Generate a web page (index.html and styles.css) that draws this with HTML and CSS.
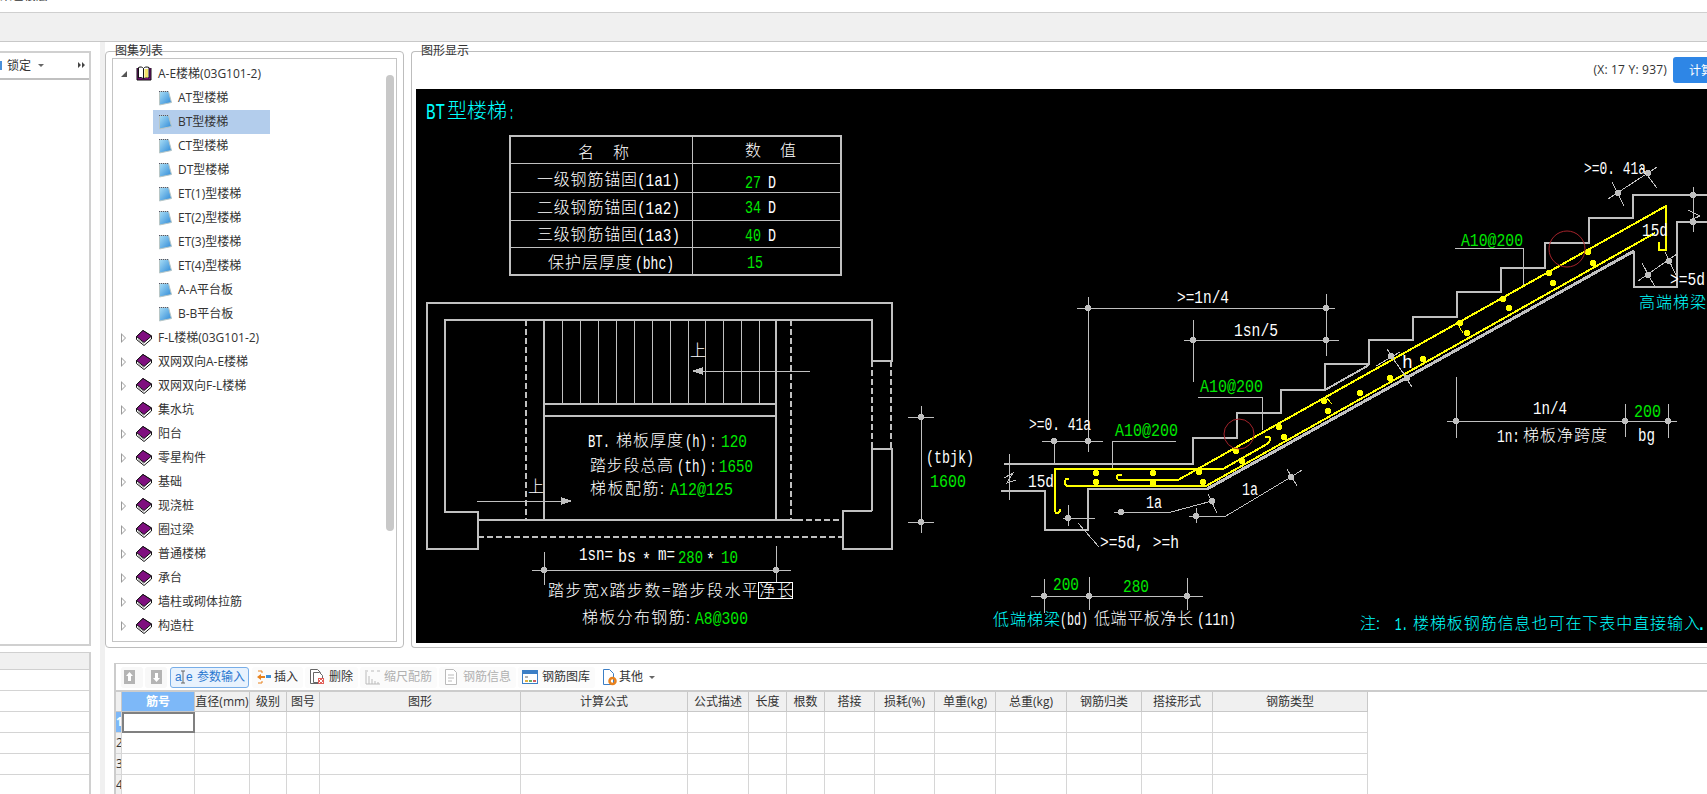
FILE: index.html
```html
<!DOCTYPE html>
<html lang="zh-CN">
<head>
<meta charset="utf-8">
<title>图集</title>
<link rel="stylesheet" href="styles.css">
</head>
<body>
<svg class="defs" width="0" height="0" aria-hidden="true">
  <defs>
    <linearGradient id="ng" x1="0" y1="0" x2="1" y2="1">
      <stop offset="0" stop-color="#a9def6"/>
      <stop offset="1" stop-color="#2a86d6"/>
    </linearGradient>
    <symbol id="ic-book" viewBox="0 0 16 16">
      <path d="M.5 6.500 7 .5l8.500 5.500v3L8 15.500.5 9.500z" fill="#fff" stroke="#111"/>
      <path d="M.5 6.500 7 .5l8.500 5.500L8 12.500z" fill="#7f0f7f" stroke="#111"/>
      <path d="M2.500 9.500l5.500 4" stroke="#999" fill="none"/>
    </symbol>
    <symbol id="ic-open" viewBox="0 0 16 16">
      <path d="M1 2v12h14V2" fill="#7f0f7f" stroke="#111"/>
      <path d="M2.500 1.500c2-1 4-.5 5 1 1-1.500 3-2 5.500-1v10.500c-2.500-1-4.500-.5-5.500 1-1-1.500-3-2-5-1z" fill="#fff" stroke="#111"/>
      <path d="M8.500 3h3.500v8.500H8.500z" fill="#f3e36a"/>
      <path d="M7.500 2.500V13" stroke="#111"/>
    </symbol>
    <symbol id="ic-note" viewBox="0 0 14 16">
      <path d="M1.500 1.500h9l3 11-12 2.500z" fill="url(#ng)" stroke="#b7c6c6"/>
      <path d="M1 1.500h9.500" stroke="#556" stroke-dasharray="1 1"/>
    </symbol>
  </defs>
</svg>
<div class="app">
  <header class="titlebar"><span class="titletext">某色楼层</span></header>
  <div class="toolbar"></div>
  <div class="content">
    <aside class="leftcol">
      <section class="lpanel">
        <div class="lhead">
          <i class="lockicon"></i><span>锁定</span><i class="caret lcaret"></i>
          <span class="more">
            <svg width="8" height="8" viewBox="0 0 8 8"><path d="M0 1l3 3-3 3zM4 1l3 3-3 3z" fill="#444"/></svg>
          </span>
        </div>
      </section>
      <section class="lgrid">
        <div class="lgrid-head"></div>
        <div class="lgrid-row"></div>
        <div class="lgrid-row"></div>
        <div class="lgrid-row"></div>
        <div class="lgrid-row"></div>
        <div class="lgrid-row"></div>
        <div class="lgrid-row"></div>
      </section>
    </aside>
    <main class="main">
      <div class="upper">
        <section class="group treegroup">
          <span class="legend">图集列表</span>
          <div class="treebox">
            <ul class="tree">
              <li class="row"><i class="exp-open"></i><svg class="ibook"><use href="#ic-open"/></svg><span>A-E楼梯(03G101-2)</span></li>
              <li class="row sub"><div class="node"><svg class="inote"><use href="#ic-note"/></svg><span>AT型楼梯</span></div></li>
              <li class="row sub"><div class="node sel"><svg class="inote"><use href="#ic-note"/></svg><span>BT型楼梯</span></div></li>
              <li class="row sub"><div class="node"><svg class="inote"><use href="#ic-note"/></svg><span>CT型楼梯</span></div></li>
              <li class="row sub"><div class="node"><svg class="inote"><use href="#ic-note"/></svg><span>DT型楼梯</span></div></li>
              <li class="row sub"><div class="node"><svg class="inote"><use href="#ic-note"/></svg><span>ET(1)型楼梯</span></div></li>
              <li class="row sub"><div class="node"><svg class="inote"><use href="#ic-note"/></svg><span>ET(2)型楼梯</span></div></li>
              <li class="row sub"><div class="node"><svg class="inote"><use href="#ic-note"/></svg><span>ET(3)型楼梯</span></div></li>
              <li class="row sub"><div class="node"><svg class="inote"><use href="#ic-note"/></svg><span>ET(4)型楼梯</span></div></li>
              <li class="row sub"><div class="node"><svg class="inote"><use href="#ic-note"/></svg><span>A-A平台板</span></div></li>
              <li class="row sub"><div class="node"><svg class="inote"><use href="#ic-note"/></svg><span>B-B平台板</span></div></li>
              <li class="row"><i class="exp"></i><svg class="ibook"><use href="#ic-book"/></svg><span>F-L楼梯(03G101-2)</span></li>
              <li class="row"><i class="exp"></i><svg class="ibook"><use href="#ic-book"/></svg><span>双网双向A-E楼梯</span></li>
              <li class="row"><i class="exp"></i><svg class="ibook"><use href="#ic-book"/></svg><span>双网双向F-L楼梯</span></li>
              <li class="row"><i class="exp"></i><svg class="ibook"><use href="#ic-book"/></svg><span>集水坑</span></li>
              <li class="row"><i class="exp"></i><svg class="ibook"><use href="#ic-book"/></svg><span>阳台</span></li>
              <li class="row"><i class="exp"></i><svg class="ibook"><use href="#ic-book"/></svg><span>零星构件</span></li>
              <li class="row"><i class="exp"></i><svg class="ibook"><use href="#ic-book"/></svg><span>基础</span></li>
              <li class="row"><i class="exp"></i><svg class="ibook"><use href="#ic-book"/></svg><span>现浇桩</span></li>
              <li class="row"><i class="exp"></i><svg class="ibook"><use href="#ic-book"/></svg><span>圈过梁</span></li>
              <li class="row"><i class="exp"></i><svg class="ibook"><use href="#ic-book"/></svg><span>普通楼梯</span></li>
              <li class="row"><i class="exp"></i><svg class="ibook"><use href="#ic-book"/></svg><span>承台</span></li>
              <li class="row"><i class="exp"></i><svg class="ibook"><use href="#ic-book"/></svg><span>墙柱或砌体拉筋</span></li>
              <li class="row"><i class="exp"></i><svg class="ibook"><use href="#ic-book"/></svg><span>构造柱</span></li>
            </ul>
            <div class="scroll"><div class="thumb"></div></div>
          </div>
        </section>
        <section class="group graphgroup">
          <span class="legend">图形显示</span>
          <div class="graphhead">
            <span class="coords">(X: 17 Y: 937)</span>
            <button class="calc">计算</button>
          </div>
          <svg class="cad" viewBox="416 89 1291 554" width="1291" height="554">
            <defs>
              <circle id="d" r="3" fill="#c0c0c0"/>
              <circle id="y" r="3" fill="#ffff00"/>
            </defs>
            <!-- parameter table -->
            <rect class="wall" x="510" y="136" width="331" height="139"/>
            <path class="thin" d="M692 136V275M510 163H841M510 192H841M510 220H841M510 247H841"/>
            <text class="w" x="578" y="158">名</text><text class="w" x="613" y="158">称</text>
            <text class="w" x="745" y="156">数</text><text class="w" x="780" y="156">值</text>
            <text class="w" x="537" y="185" textLength="100">一级钢筋锚固</text><text class="w n" x="637" y="186" textLength="43" lengthAdjust="spacingAndGlyphs">(1a1)</text>
            <text class="w" x="537" y="213" textLength="100">二级钢筋锚固</text><text class="w n" x="637" y="214" textLength="43" lengthAdjust="spacingAndGlyphs">(1a2)</text>
            <text class="w" x="537" y="240" textLength="100">三级钢筋锚固</text><text class="w n" x="637" y="241" textLength="43" lengthAdjust="spacingAndGlyphs">(1a3)</text>
            <text class="w" x="548" y="268" textLength="84">保护层厚度</text><text class="w n" x="635" y="269" textLength="39" lengthAdjust="spacingAndGlyphs">(bhc)</text>
            <text class="g n" x="745" y="188" textLength="16" lengthAdjust="spacingAndGlyphs">27</text><text class="w n" x="768" y="188" textLength="8" lengthAdjust="spacingAndGlyphs">D</text>
            <text class="g n" x="745" y="213" textLength="16" lengthAdjust="spacingAndGlyphs">34</text><text class="w n" x="768" y="213" textLength="8" lengthAdjust="spacingAndGlyphs">D</text>
            <text class="g n" x="745" y="241" textLength="16" lengthAdjust="spacingAndGlyphs">40</text><text class="w n" x="768" y="241" textLength="8" lengthAdjust="spacingAndGlyphs">D</text>
            <text class="g n" x="747" y="268" textLength="16" lengthAdjust="spacingAndGlyphs">15</text>
            <text class="c n bign" x="426" y="119" textLength="19" lengthAdjust="spacingAndGlyphs">BT</text>
            <text class="c big" x="447" y="118" textLength="60">型楼梯</text>
            <text class="c n" x="509" y="119" textLength="5" lengthAdjust="spacingAndGlyphs">:</text>

            <!-- plan view -->
            <path class="wall" d="M872 361H892V303H427V549H478V512H445V320H872V361"/>
            <path class="wall" d="M872 511V449H892V549H843V511H872"/>
            <path class="wall dash" d="M872 361V449M891 361V449"/>
            <path class="wall dash" d="M526 320V519M791 320V519M797 520H843M478 537H843"/>
            <path class="wall" d="M544 320V519M776 320V519M544 404H776M544 416H776M478 520H797"/>
            <path class="thin" d="M562 320V404M580 320V404M598 320V404M616 320V404M634 320V404M652 320V404M670 320V404M688 320V404M705 320V404M723 320V404M741 320V404M759 320V404"/>
            <path class="thin" d="M810 371H695M477 501H565"/>
            <path class="fillg" d="M692 371L703 367V375zM572 501L561 497V505z"/>
            <text class="w" x="690" y="356">上</text>
            <text class="w" x="528" y="492">上</text>
            <text class="w n" x="588" y="447" textLength="22" lengthAdjust="spacingAndGlyphs">BT.</text><text class="w" x="616" y="446" textLength="67">梯板厚度</text><text class="w n" x="685" y="447" textLength="22" lengthAdjust="spacingAndGlyphs">(h)</text><text class="w n" x="710" y="447" textLength="6" lengthAdjust="spacingAndGlyphs">:</text>
            <text class="g n" x="721" y="447" textLength="26" lengthAdjust="spacingAndGlyphs">120</text>
            <text class="w" x="590" y="471" textLength="83">踏步段总高</text><text class="w n" x="677" y="472" textLength="30" lengthAdjust="spacingAndGlyphs">(th)</text><text class="w n" x="710" y="472" textLength="6" lengthAdjust="spacingAndGlyphs">:</text>
            <text class="g n" x="719" y="472" textLength="34" lengthAdjust="spacingAndGlyphs">1650</text>
            <text class="w" x="590" y="494" textLength="74">梯板配筋:</text><text class="g n" x="670" y="495" textLength="63" lengthAdjust="spacingAndGlyphs">A12@125</text>
            <text class="w n" x="579" y="560" textLength="34" lengthAdjust="spacingAndGlyphs">1sn=</text><text class="w n" x="618" y="562" textLength="18" lengthAdjust="spacingAndGlyphs">bs</text><text class="w n" x="642" y="565" textLength="9" lengthAdjust="spacingAndGlyphs">*</text><text class="w n" x="658" y="560" textLength="17" lengthAdjust="spacingAndGlyphs">m=</text>
            <text class="g n" x="678" y="563" textLength="25" lengthAdjust="spacingAndGlyphs">280</text><text class="w n" x="706" y="565" textLength="9" lengthAdjust="spacingAndGlyphs">*</text><text class="g n" x="721" y="563" textLength="17" lengthAdjust="spacingAndGlyphs">10</text>
            <path class="thin" d="M532 570H791M544 552V585M776 546V582"/>
            <use href="#d" x="544" y="570"/><use href="#d" x="776" y="570"/>
            <rect class="whitebox" x="758" y="582" width="34" height="16"/>
            <text class="w" x="548" y="596" textLength="245">踏步宽x踏步数=踏步段水平净长</text>
            <text class="w" x="582" y="623" textLength="108">梯板分布钢筋:</text><text class="g n" x="695" y="624" textLength="53" lengthAdjust="spacingAndGlyphs">A8@300</text>
            <path class="thin" d="M921 406V533M908 417H934M908 522H934"/>
            <use href="#d" x="921" y="417"/><use href="#d" x="921" y="522"/>
            <text class="w n" x="926" y="463" textLength="48" lengthAdjust="spacingAndGlyphs">(tbjk)</text>
            <text class="g n" x="930" y="487" textLength="36" lengthAdjust="spacingAndGlyphs">1600</text>

            <!-- stair section: concrete outline -->
            <path class="wall" d="M1004 464H1193V438H1237V413H1281V390H1325V364H1369V340H1413V317H1457V292H1501V268H1545V243H1589V218H1633V195H1707"/>
            <path class="wall" d="M1707 222H1677V287H1634V251"/>
            <path class="wall" d="M1207 489H1088V530H1045V491H1001"/>
            <path class="wall thick2" d="M1634 251L1207 489"/>
            <path class="wall" d="M1325 390L1369 365"/>
            <!-- reinforcement -->
            <path class="rebar" d="M1060 509Q1060 513 1057 513Q1055 513 1055 510V469H1223L1267 444Q1271 441 1270 438Q1269 436 1265 437"/>
            <path class="rebar" d="M1069 479H1067Q1065 479 1065 482Q1065 486 1068 486H1206L1655 233"/>
            <path class="rebar" d="M1122 475H1119Q1117 475 1117 477Q1117 480 1120 480H1178L1666 206V250H1659V242"/>
            <path class="thinY" d="M1325 396L1332 404M1457 323L1463 333"/>
            <g>
              <use href="#y" x="1096" y="473"/><use href="#y" x="1096" y="482"/><use href="#y" x="1153" y="473"/><use href="#y" x="1153" y="483"/>
              <use href="#y" x="1199" y="472"/><use href="#y" x="1203" y="482"/><use href="#y" x="1236" y="451"/><use href="#y" x="1242" y="461"/>
              <use href="#y" x="1279" y="427"/><use href="#y" x="1284" y="437"/><use href="#y" x="1324" y="401"/><use href="#y" x="1328" y="411"/>
              <use href="#y" x="1360" y="393"/><use href="#y" x="1390" y="378"/><use href="#y" x="1423" y="359"/>
              <use href="#y" x="1460" y="323"/><use href="#y" x="1467" y="333"/><use href="#y" x="1503" y="299"/><use href="#y" x="1509" y="308"/>
              <use href="#y" x="1549" y="273"/><use href="#y" x="1553" y="283"/><use href="#y" x="1588" y="252"/><use href="#y" x="1593" y="263"/>
            </g>
            <circle class="red" cx="1239" cy="434" r="15"/>
            <circle class="red" cx="1567" cy="249" r="18"/>
            <!-- dimensions -->
            <path class="thin" d="M1077 308H1335M1088 297V452M1326 294V356"/>
            <path class="thin" d="M1184 340H1339M1193 320V382"/>
            <path class="thin" d="M1198 397H1262V430M1176 441H1112V468M1042 441H1103M1054 441V464"/>
            <path class="thin" d="M1114 512H1171L1212 501M1208 494L1217 513"/>
            <path class="thin" d="M1189 516H1226L1291 477L1302 470M1287 469L1297 486M1196 508V523"/>
            <path class="thin" d="M1068 505V526M1063 518H1095M1078 523L1099 547"/>
            <path class="thin" d="M1031 596H1203M1044 579V613M1089 577V610M1187 578V610"/>
            <path class="thin" d="M1009 454V500M1004 478L1013 473L1007 483L1016 480"/>
            <path class="thin" d="M1447 421H1677M1456 377V438M1625 404V437M1668 404V438"/>
            <path class="thin" d="M1376 366L1400 352M1387 349L1412 387M1391 356L1407 378"/>
            <path class="thin" d="M1608 199L1657 167M1612 182L1624 206M1641 167L1657 188"/>
            <path class="thin" d="M1693 187V232M1688 210L1700 216L1690 220"/>
            <path class="thin" d="M1638 281L1677 254M1642 263L1655 287M1665 252L1677 277"/>
            <path class="thin" d="M1455 248H1523V285"/>
            <g>
              <use href="#d" x="1088" y="308"/><use href="#d" x="1326" y="308"/><use href="#d" x="1193" y="340"/><use href="#d" x="1326" y="340"/>
              <use href="#d" x="1054" y="441"/><use href="#d" x="1088" y="441"/><use href="#d" x="1121" y="512"/><use href="#d" x="1212" y="501"/>
              <use href="#d" x="1196" y="516"/><use href="#d" x="1291" y="477"/><use href="#d" x="1068" y="518"/>
              <use href="#d" x="1044" y="596"/><use href="#d" x="1089" y="596"/><use href="#d" x="1187" y="596"/>
              <use href="#d" x="1456" y="421"/><use href="#d" x="1625" y="421"/><use href="#d" x="1668" y="421"/>
              <use href="#d" x="1391" y="356"/><use href="#d" x="1407" y="378"/><use href="#d" x="1618" y="193"/><use href="#d" x="1648" y="173"/>
              <use href="#d" x="1693" y="195"/><use href="#d" x="1693" y="222"/><use href="#d" x="1648" y="275"/><use href="#d" x="1669" y="261"/>
            </g>
            <text class="w n" x="1177" y="303" textLength="52" lengthAdjust="spacingAndGlyphs">&gt;=1n/4</text>
            <text class="w n" x="1234" y="336" textLength="44" lengthAdjust="spacingAndGlyphs">1sn/5</text>
            <text class="g n" x="1200" y="392" textLength="63" lengthAdjust="spacingAndGlyphs">A10@200</text>
            <text class="g n" x="1115" y="436" textLength="63" lengthAdjust="spacingAndGlyphs">A10@200</text>
            <text class="g n" x="1461" y="246" textLength="62" lengthAdjust="spacingAndGlyphs">A10@200</text>
            <text class="w n" x="1029" y="430" textLength="62" lengthAdjust="spacingAndGlyphs">&gt;=0. 41a</text>
            <text class="w n" x="1584" y="174" textLength="62" lengthAdjust="spacingAndGlyphs">&gt;=0. 41a</text>
            <text class="w n" x="1028" y="487" textLength="26" lengthAdjust="spacingAndGlyphs">15d</text>
            <text class="w n" x="1642" y="236" textLength="26" lengthAdjust="spacingAndGlyphs">15d</text>
            <text class="w n" x="1146" y="508" textLength="16" lengthAdjust="spacingAndGlyphs">1a</text>
            <text class="w n" x="1242" y="495" textLength="16" lengthAdjust="spacingAndGlyphs">1a</text>
            <text class="w n" x="1100" y="548" textLength="79" lengthAdjust="spacingAndGlyphs">&gt;=5d, &gt;=h</text>
            <text class="w n" x="1670" y="285" textLength="35" lengthAdjust="spacingAndGlyphs">&gt;=5d</text>
            <text class="w n" x="1402" y="368">h</text>
            <text class="c" x="1639" y="308" textLength="67">高端梯梁</text>
            <text class="g n" x="1053" y="590" textLength="26" lengthAdjust="spacingAndGlyphs">200</text>
            <text class="g n" x="1123" y="592" textLength="26" lengthAdjust="spacingAndGlyphs">280</text>
            <text class="c" x="993" y="625" textLength="67">低端梯梁</text>
            <text class="w n" x="1060" y="625" textLength="28" lengthAdjust="spacingAndGlyphs">(bd)</text>
            <text class="w" x="1094" y="624" textLength="99">低端平板净长</text>
            <text class="w n" x="1197" y="625" textLength="39" lengthAdjust="spacingAndGlyphs">(11n)</text>
            <text class="w n" x="1533" y="414" textLength="34" lengthAdjust="spacingAndGlyphs">1n/4</text>
            <text class="g n" x="1634" y="417" textLength="27" lengthAdjust="spacingAndGlyphs">200</text>
            <text class="w n" x="1497" y="442" textLength="23" lengthAdjust="spacingAndGlyphs">1n:</text>
            <text class="w" x="1523" y="441" textLength="84">梯板净跨度</text>
            <text class="w n" x="1638" y="441" textLength="17" lengthAdjust="spacingAndGlyphs">bg</text>
            <text class="c" x="1360" y="629">注:</text>
            <text class="c n" x="1395" y="630" textLength="13" lengthAdjust="spacingAndGlyphs">1.</text>
            <text class="c" x="1413" y="629" textLength="287">楼梯板钢筋信息也可在下表中直接输入</text>
            <text class="c n" x="1696" y="630">.</text>
          </svg>
        </section>
      </div>
      <div class="lower">
        <div class="gridwrap">
          <div class="gridbar">
            <button class="tb arrow">
              <svg width="11" height="14" viewBox="0 0 11 14"><rect width="11" height="14" fill="#b4b4b4"/><path d="M5.500 2L9 6H7v5H4V6H2z" fill="#fff"/></svg>
            </button>
            <button class="tb arrow">
              <svg width="11" height="14" viewBox="0 0 11 14"><rect width="11" height="14" fill="#b4b4b4"/><path d="M5.500 12L2 8h2V3h3v5h2z" fill="#fff"/></svg>
            </button>
            <button class="tb active">
              <svg width="18" height="14" viewBox="0 0 18 14"><text class="ae" x="0" y="11">a</text><text class="ae" x="11" y="11">e</text><path d="M6 1h4M8 1v12M6 13h4" stroke="#666" fill="none"/></svg>
              <span>参数输入</span>
            </button>
            <button class="tb ins">
              <svg width="16" height="16" viewBox="0 0 16 16"><path d="M2 2h4M6 2v2M6 12v2M2 14h4" stroke="#e8821e" fill="none"/><path d="M1 8l4-3v2h4v2H5v2z" fill="#e8821e"/><rect x="10" y="6" width="5" height="3" fill="#3c8fd8"/></svg>
              <span>插入</span>
            </button>
            <button class="tb">
              <svg width="18" height="18" viewBox="0 0 18 18"><path d="M1.500 1.500h7l3 3v11h-10z" fill="#fff" stroke="#666"/><path d="M4.500 4.500h6l3 3v7h-9z" fill="#fff" stroke="#666"/><rect x="9" y="10" width="6" height="6" fill="#e0605a"/><path d="M10 11l4 4M14 11l-4 4" stroke="#fff"/></svg>
              <span>删除</span>
            </button>
            <button class="tb dim">
              <svg width="18" height="18" viewBox="0 0 18 18"><path d="M1 3h3M7 3h3M13 3h3M2 4v12M5 8v8M8 11v5M11 13v3M14 14v2M2 16h14" stroke="#bbb" fill="none"/></svg>
              <span>缩尺配筋</span>
            </button>
            <button class="tb dim">
              <svg width="18" height="18" viewBox="0 0 18 18"><path d="M2.500 1.500h8l3 3v12h-11z" fill="#fff" stroke="#bbb"/><path d="M5 7h6M5 10h6M5 13h4" stroke="#bbb"/></svg>
              <span>钢筋信息</span>
            </button>
            <button class="tb">
              <svg width="18" height="18" viewBox="0 0 18 18"><rect x=".5" y="2.500" width="15" height="13" fill="#fff" stroke="#3c7fc6"/><rect x="1" y="3" width="14" height="3" fill="#3c7fc6"/><path d="M3 9h3" stroke="#666"/><path d="M3 13h3" stroke="#e0b040" stroke-width="2"/><path d="M7 13h3" stroke="#66b066" stroke-width="2"/><path d="M11 13h3" stroke="#d06060" stroke-width="2"/></svg>
              <span>钢筋图库</span>
            </button>
            <button class="tb other">
              <svg width="18" height="18" viewBox="0 0 18 18"><path d="M2.500 1.500h6l4 4v11h-10z" fill="#fff" stroke="#3c7fc6"/><circle cx="11.500" cy="13" r="3" fill="none" stroke="#e8821e" stroke-width="2.500"/></svg>
              <span>其他</span><i class="caret"></i>
            </button>
          </div>
          <div class="grid">
            <div class="gh rh"></div><div class="gh on">筋号</div><div class="gh">直径(mm)</div><div class="gh">级别</div><div class="gh">图号</div><div class="gh">图形</div><div class="gh">计算公式</div><div class="gh">公式描述</div><div class="gh">长度</div><div class="gh">根数</div><div class="gh">搭接</div><div class="gh">损耗(%)</div><div class="gh">单重(kg)</div><div class="gh">总重(kg)</div><div class="gh">钢筋归类</div><div class="gh">搭接形式</div><div class="gh">钢筋类型</div>
            <div class="gc rh on">1</div><div class="gc cur"></div><div class="gc"></div><div class="gc"></div><div class="gc"></div><div class="gc"></div><div class="gc"></div><div class="gc"></div><div class="gc"></div><div class="gc"></div><div class="gc"></div><div class="gc"></div><div class="gc"></div><div class="gc"></div><div class="gc"></div><div class="gc"></div><div class="gc"></div>
            <div class="gc rh">2</div><div class="gc"></div><div class="gc"></div><div class="gc"></div><div class="gc"></div><div class="gc"></div><div class="gc"></div><div class="gc"></div><div class="gc"></div><div class="gc"></div><div class="gc"></div><div class="gc"></div><div class="gc"></div><div class="gc"></div><div class="gc"></div><div class="gc"></div><div class="gc"></div>
            <div class="gc rh">3</div><div class="gc"></div><div class="gc"></div><div class="gc"></div><div class="gc"></div><div class="gc"></div><div class="gc"></div><div class="gc"></div><div class="gc"></div><div class="gc"></div><div class="gc"></div><div class="gc"></div><div class="gc"></div><div class="gc"></div><div class="gc"></div><div class="gc"></div><div class="gc"></div>
            <div class="gc rh">4</div><div class="gc"></div><div class="gc"></div><div class="gc"></div><div class="gc"></div><div class="gc"></div><div class="gc"></div><div class="gc"></div><div class="gc"></div><div class="gc"></div><div class="gc"></div><div class="gc"></div><div class="gc"></div><div class="gc"></div><div class="gc"></div><div class="gc"></div><div class="gc"></div>
          </div>
        </div>
      </div>
    </main>
  </div>
</div>
</body>
</html>
```
FILE: styles.css
```css
* { box-sizing: border-box; }
html, body { margin: 0; padding: 0; height: 100%; overflow: hidden; background: #fff; }
body, button { font-family: "Open Sans", "Noto Sans CJK SC", "Liberation Sans", sans-serif; font-size: 12px; color: #333; }
ul { list-style: none; margin: 0; padding: 0; }
i { display: block; }
.defs { position: absolute; }

.app { width: 1707px; height: 794px; overflow: hidden; display: flex; flex-direction: column; }
.titlebar { height: 13px; border-bottom: 1px solid #cfcfcf; overflow: hidden; flex: none; }
.titletext { display: block; margin-top: -13px; line-height: 18px; }
.toolbar { height: 29px; background: #f0f0f0; border-bottom: 1px solid #c8c8c8; flex: none; }
.content { flex: 1; display: flex; min-height: 0; }

/* left column */
.leftcol { width: 100px; flex: none; padding-top: 9px; display: flex; flex-direction: column; }
.lpanel { width: 91px; height: 595px; border: 2px solid #d0d0d0; border-left: 0; flex: none; }
.lhead { height: 27px; display: flex; align-items: center; border-bottom: 2px solid #c0c0c0; padding-bottom: 1px; }
.lockicon { width: 2px; height: 9px; background: #4a90d9; margin-right: 5px; }
.lcaret { margin-left: 7px; }
.more { margin-left: auto; margin-right: 3px; line-height: 0; }
.caret { width: 0; height: 0; border: 3px solid transparent; border-top: 3px solid #666; border-bottom: 0; }
.lgrid { width: 91px; margin-top: 6px; border-right: 2px solid #d0d0d0; border-top: 1px solid #d0d0d0; }
.lgrid-head { height: 17px; background: #f0f0f0; border-bottom: 1px solid #d0d0d0; }
.lgrid-row { height: 21px; border-bottom: 1px solid #d4d4d4; }

/* main */
.main { flex: 1; min-width: 0; display: flex; flex-direction: column; background: #f0f0f0; }
.upper { height: 612px; flex: none; display: flex; background: #fff; padding: 9px 0 4px 5px; border-left: 5px solid #f0f0f0; }
.group { border: 1px solid #bdbdbd; border-radius: 4px; position: relative; background: #fff; height: 597px; }
.legend { position: absolute; top: -8px; left: 9px; line-height: 13px; font-size: 12px; color: #333; }
.treegroup { width: 299px; margin-left: -5px; padding: 6px; flex: none; }
.graphgroup { margin-left: 7px; flex: 1; min-width: 0; padding-left: 4px; display: flex; flex-direction: column; border-right: 0; border-radius: 4px 0 0 4px; }

/* tree */
.treebox { height: 584px; border: 1px solid #c4c4c4; display: flex; }
.tree { flex: 1; padding-top: 3px; min-width: 0; overflow: hidden; }
.row { height: 24px; display: flex; align-items: center; padding-left: 8px; white-space: nowrap; line-height: 24px; }
.exp { width: 0; height: 0; border-style: solid; border-width: 5px 0 5px 5px; border-color: transparent transparent transparent #999; margin-right: 10px; position: relative; }
.exp::after { content: ""; position: absolute; left: -4px; top: -3px; border-style: solid; border-width: 3px 0 3px 3px; border-color: transparent transparent transparent #fff; }
.exp-open { width: 0; height: 0; border-style: solid; border-width: 0 0 6px 6px; border-color: transparent transparent #555 transparent; margin-right: 9px; }
.ibook { width: 16px; height: 16px; margin-right: 6px; flex: none; }
.sub { padding-left: 40px; }
.node { width: 117px; height: 24px; display: flex; align-items: center; padding-left: 5px; }
.node.sel { background: #b3cdec; }
.inote { width: 14px; height: 16px; margin-right: 6px; flex: none; }
.scroll { width: 8px; margin-right: 2px; flex: none; }
.thumb { margin-top: 16px; height: 456px; background: #c8c8c8; border-radius: 4px; }

/* graph */
.graphhead { height: 37px; flex: none; display: flex; justify-content: flex-end; align-items: flex-start; padding-top: 5px; }
.coords { line-height: 26px; margin-right: 6px; letter-spacing: .2px; }
.calc { width: 34px; height: 26px; border: 0; padding: 0 0 0 16px; background: #2e86e6; color: #fff; border-radius: 3px 0 0 3px; white-space: nowrap; overflow: hidden; text-align: left; flex: none; }
.cad { display: block; background: #000; flex: none; shape-rendering: crispEdges; }
.cad text { font-family: "Noto Sans CJK SC", "Liberation Mono", monospace; font-size: 16px; font-weight: 300; }
.cad .n { font-family: "Liberation Mono", monospace; font-size: 18px; font-weight: 400; }
.cad .big { font-size: 20px; }
.cad .bign { font-size: 22px; }
.cad .w { fill: #fff; }
.cad .g { fill: #00e800; }
.cad .c { fill: #00ffff; }
.thin { fill: none; stroke: #c0c0c0; stroke-width: 1; }
.wall { fill: none; stroke: #c0c0c0; stroke-width: 2; }
.dash { stroke-dasharray: 6 3; }
.thick2 { stroke-width: 3; }
.fillg { fill: #c0c0c0; }
.whitebox { fill: none; stroke: #fff; stroke-width: 1; }
.rebar { fill: none; stroke: #ffff00; stroke-width: 2; }
.thinY { fill: none; stroke: #ffff00; stroke-width: 1; }
.red { fill: none; stroke: #a3232b; stroke-width: 1; shape-rendering: auto; }

/* lower */
.lower { flex: 1; min-height: 0; margin-left: 5px; padding: 9px 0 0 9px; background: #fff; overflow: hidden; }
.gridwrap { border-top: 1px solid #ccc; border-left: 2px solid #ccc; }
.gridbar { height: 28px; display: flex; align-items: center; padding-left: 5px; gap: 2px; border-bottom: 2px solid #ccc; }
.tb { height: 21px; border: 0; background: #fbfbfb; border-radius: 3px; padding: 0 5px 0 4px; display: flex; align-items: center; gap: 2px; line-height: 1; color: #333; white-space: nowrap; }
.tb svg { flex: none; }
.tb.arrow { width: 22px; padding: 0 0 0 3px; background: #f8f8f8; }
.tb.arrow + .tb.arrow { padding-left: 6px; }
.tb.active { width: 79px; margin-left: 1px; margin-right: 1px; padding: 0 0 0 4px; gap: 4px; background: #e8f2fd; border: 1px solid #78aee8; color: #2b78d0; }
.dim { color: #b0b0b0; }
.other { gap: 0; background: #fff; }
.other .caret { margin-left: 6px; }
.ae { font-size: 12px; fill: #2b78d0; font-family: "Liberation Sans", sans-serif; }
.grid { display: grid; grid-template-columns: 6px 73px 55px 37px 33px 201px 167px 61px 38px 38px 50px 60px 61px 71px 75px 71px 155px; grid-template-rows: 20px repeat(4, 21px); width: 1246px; }
.gh { background: #f0f0f0; border-right: 1px solid #c8c8c8; border-bottom: 1px solid #c8c8c8; text-align: center; line-height: 19px; white-space: nowrap; overflow: hidden; }
.gh.on, .gc.on { background: #7db8f8; color: #fff; font-weight: 700; }
.gc { border-right: 1px solid #d6d6d6; border-bottom: 1px solid #d6d6d6; background: #fff; }
.gc.rh { background: #f0f0f0; text-align: center; line-height: 20px; overflow: hidden; font-size: 12px; padding: 0; }
.gc.rh.on { background: #7db8f8; }
.gc.cur { border: 2px solid #808080; }
```
